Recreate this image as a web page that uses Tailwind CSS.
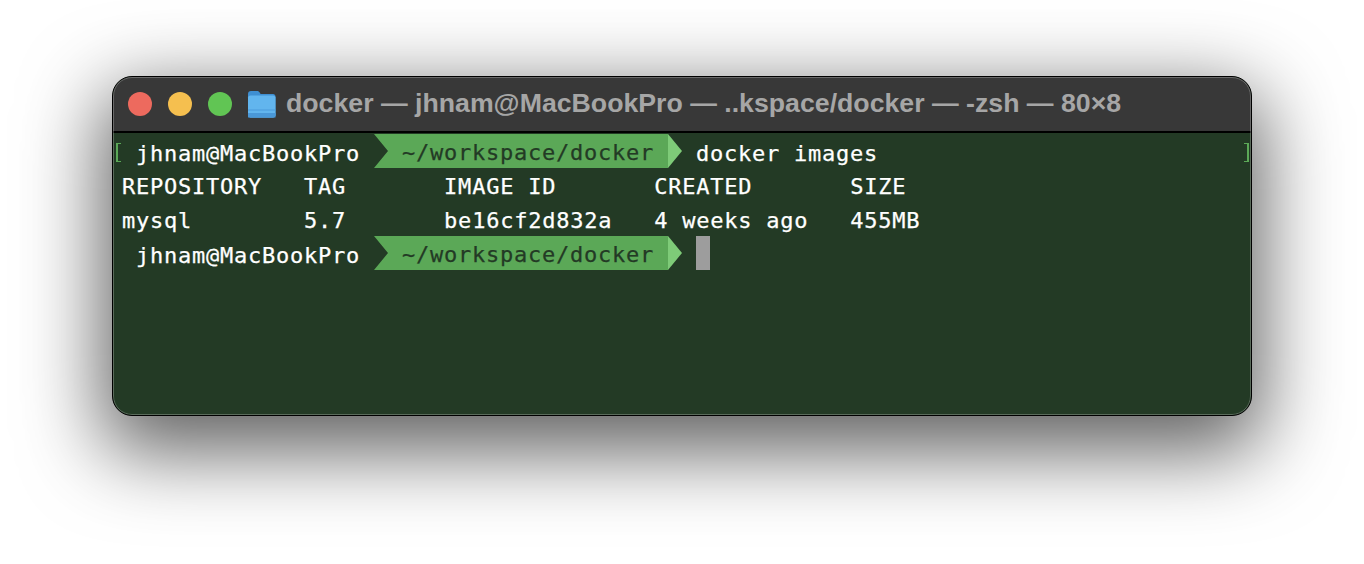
<!DOCTYPE html>
<html lang="en">
<head>
  <meta charset="UTF-8" />
  <title>docker - zsh</title>
  <script src="https://cdn.jsdelivr.net/npm/@tailwindcss/browser@4"></script>
</head>
<body class="bg-white h-[564px] overflow-hidden">
  <div class="pt-[76px] pl-[112px]">
    <!-- Terminal window -->
    <div class="relative w-[1140px] h-[340px] rounded-[20px] bg-[#233a25] border border-black overflow-hidden flex flex-col shadow-[0_26px_80px_10px_rgba(0,0,0,0.62)] font-['DejaVu_Sans_Mono',monospace] text-[22px] tracking-[0.76px] text-white">
      <!-- Title bar -->
      <div class="h-[56px] shrink-0 bg-[#383838] border-b-2 border-black flex items-center pl-[15px]">
        <div class="w-6 h-6 rounded-full bg-[#ed6a5e]"></div>
        <div class="w-6 h-6 rounded-full bg-[#f5bf4f] ml-4"></div>
        <div class="w-6 h-6 rounded-full bg-[#61c554] ml-4"></div>
        <svg class="ml-[15px] w-[29px] h-[28px]" viewBox="0 0 29 28">
          <path d="M1 4C1 2 2 1 4 1h6c1.500 0 2 .5 3 2l.6 1H26c1.500 0 2.500 1 2.500 2.500V25c0 1.500-1 2.500-2.500 2.500H3.500C2 27.500 1 26.500 1 25z" fill="#3f8fd2"/>
          <path d="M1 7.500C1 6.500 2 5.500 3.500 5.500H26c1.500 0 2.500 1 2.500 2V25c0 1.500-1 2.500-2.500 2.500H3.500C2 27.500 1 26.500 1 25z" fill="#62b5ee"/>
          <path d="M1 19.500h27.500v1H1z" fill="#4a9bdb"/>
          <path d="M1 23h27.500v4.500H1z" fill="#4a98d8"/>
        </svg>
        <span class="ml-[10px] pb-[2px] font-['Liberation_Sans',sans-serif] font-bold text-[26.7px] tracking-normal text-[#a6a6a6] whitespace-pre">docker — jhnam@MacBookPro — ..kspace/docker — -zsh — 80×8</span>
      </div>

      <!-- Terminal body -->
      <div class="pt-px [-webkit-text-stroke:0.25px_currentColor]">
        <!-- Prompt with command -->
        <div class="h-[34px] flex items-center relative pl-[23px]">
          <span class="absolute left-[3px] top-[9px] h-[19px] w-[5px] border-l-2 border-y border-[#5ba857]"></span>
          <span class="w-[238px] pt-[4px] whitespace-pre">jhnam@MacBookPro</span>
          <div class="h-[34px] w-[294px] bg-[#5ba857] pl-[28px] leading-[38px] text-[#233a25] whitespace-pre [clip-path:polygon(0_0,100%_0,100%_100%,0_100%,14px_50%)]">~/workspace/docker</div>
          <div class="h-[34px] w-[14px] bg-[#7ecb78] [clip-path:polygon(0_0,100%_50%,0_100%)]"></div>
          <span class="ml-[14px] pt-[4px] whitespace-pre">docker images</span>
          <span class="absolute right-[2px] top-[9px] h-[19px] w-[5px] border-r-2 border-y border-[#5ba857]"></span>
        </div>
        <!-- Docker output -->
        <div class="h-[34px] leading-[38px] pl-[9px] whitespace-pre">REPOSITORY   TAG       IMAGE ID       CREATED       SIZE</div>
        <div class="h-[34px] leading-[38px] pl-[9px] whitespace-pre">mysql        5.7       be16cf2d832a   4 weeks ago   455MB</div>
        <!-- Prompt with cursor -->
        <div class="h-[34px] flex items-center pl-[23px]">
          <span class="w-[238px] pt-[4px] whitespace-pre">jhnam@MacBookPro</span>
          <div class="h-[34px] w-[294px] bg-[#5ba857] pl-[28px] leading-[38px] text-[#233a25] whitespace-pre [clip-path:polygon(0_0,100%_0,100%_100%,0_100%,14px_50%)]">~/workspace/docker</div>
          <div class="h-[34px] w-[14px] bg-[#7ecb78] [clip-path:polygon(0_0,100%_50%,0_100%)]"></div>
          <div class="ml-[14px] w-[14px] h-[34px] bg-[#9d9d9d]"></div>
        </div>
      </div>
      <!-- Light inner edge of the window -->
      <div class="absolute inset-0 rounded-[19px] border border-white/25 pointer-events-none"></div>
    </div>
  </div>
</body>
</html>
